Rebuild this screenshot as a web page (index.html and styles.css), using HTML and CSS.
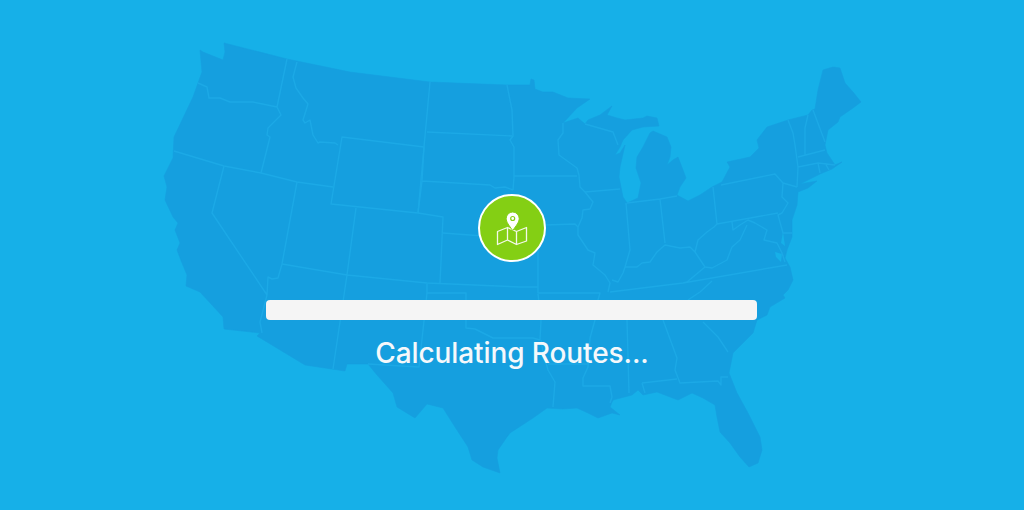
FILE: index.html
```html
<!DOCTYPE html>
<html lang="en">
<head>
<meta charset="utf-8">
<title>Calculating Routes</title>
<link rel="stylesheet" href="styles.css">
</head>
<body>
<main class="screen">
  <svg class="map" viewBox="0 0 1024 510" aria-hidden="true">
    <path class="land" d="M224 43L287 59 350 72 430 82 507 85 530 85 531 79 534 80 535 89 543 92 553 92 568 98 590 99 577 108 563 123 578 118 585 124 588 120 600 115 612 106 607 115 617 118 625 120 643 118 647 116 657 118 659 126 643 127 632 130 623 140 620 147 615 155 620 153 625 145 620 167 619 177 623 197 627 203 638 198 641 183 636 168 637 157 643 147 650 133 653 131 667 137 671 147 670 157 667 165 673 160 678 157 683 170 686 178 680 187 677 195 688 201 700 195 712 187 722 182 730 167 727 162 750 157 759 148 757 140 767 127 788 120 808 115 812 110 815 109 818 90 823 70 833 67 840 68 845 83 853 92 861 102 853 108 840 117 838 122 828 130 825 145 827 153 835 165 842 162 832 169 820 174 800 184 817 181 808 188 798 192 797 205 792 220 792 237 787 250 785 258 790 267 793 280 788 290 783 295 785 298 770 307 767 315 757 320 753 333 733 353 729 373 737 393 748 413 760 437 762 450 758 463 749 467 740 457 730 443 720 432 717 417 715 405 703 398 692 393 678 400 657 392 643 395 638 390 632 395 613 400 610 407 620 415 612 413 598 418 588 413 577 408 563 409 547 408 533 418 510 433 507 437 498 450 497 458 500 473 483 467 472 460 468 447 455 427 443 408 427 404 415 418 397 407 393 393 377 375 368 364 347 364 345 371 305 365 257 336 260 333 224 329 223 317 212 305 200 292 186 286 187 275 182 263 177 250 180 243 175 230 178 223 173 217 165 200 167 187 164 176 173 158 174 137 193 97 198 83 202 72 200 50 203 52 223 60 225 52Z"/>
    <path class="bay" d="M778 216L783 232 781 243 785 246 783 232Z"/>
    <path class="bay" d="M775 252L782 254 781 262 776 257Z"/>
    <g class="borders">
      <path d="M287 59L277 107M198 83L207 87 209 98 220 98 230 102 253 102 277 107 281 115 268 128 267 135 270 137 261 173"/>
      <path d="M297 62L293 77 296 88 303 98 308 104 303 120 305 123 310 120 313 135 318 143 320 142 335 143 338 145"/>
      <path d="M174 151L224 166 261 173 297 182 333 187"/>
      <path d="M342 137L424 147 418 213 331 204Z"/>
      <path d="M224 166L212 213 267 295M297 182L282 264 278 278 272 279 268 277 267 295 260 322 262 333"/>
      <path d="M282 264L347 275 427 283 520 287 538 287M356 208L347 275 333 369"/>
      <path d="M418 213L443 217 440 283M443 233L483 236M545 225L575 224 578 227"/>
      <path d="M430 82L424 147 422 181 418 213M427 132L512 136M422 181L490 185 495 188 505 187 513 190"/>
      <path d="M507 85L512 110 513 136 510 140 514 147 514 177 513 190M514 176L577 176"/>
      <path d="M538 250L538 293 600 293 598 300 595 320 590 338 588 367 583 378 583 386 610 386 612 397 610 403"/>
      <path d="M427 284L427 293 466 293 466 328 475 329 493 338 507 338 533 338 540 340 541 320 538 294M541 340L543 352 548 370 555 382 553 407M548 364L588 364"/>
      <path d="M427 293L419 367 368 364"/>
      <path d="M563 123L563 133 558 140 559 155 577 168 579 175 580 187 585 192 593 202 590 209 583 210 582 218 578 227 578 235 588 250 595 253 593 265 605 275 610 283 608 292"/>
      <path d="M585 124L613 132 618 145M585 192L620 189M626 203L630 250 625 267 623 273 618 282 612 280M660 199L665 243M627 203L660 199 677 196"/>
      <path d="M713 187L717 224M625 267L637 267 642 263 650 262 657 252 665 245 680 248 690 247 695 252 705 267 712 268 727 260 732 247 740 240 747 225M695 252L698 240 707 232 714 227 717 224 778 213"/>
      <path d="M721 185L775 174 783 183 782 197 788 203 782 213 778 215 783 233 792 233M783 183L797 187"/>
      <path d="M732 222L733 230 740 225 748 220 755 223 767 230 764 240 777 243 782 253 785 262"/>
      <path d="M788 120L793 133 795 145 798 167 797 187M808 115L805 128 805 155M813 110L825 142M798 157L825 150M798 167L818 163 835 165M818 163L820 173M825 163L829 170"/>
      <path d="M787 265L683 283 610 292M705 267L687 282 683 283M712 281L700 292 688 300"/>
      <path d="M703 322L718 337 728 352M663 320L677 358 675 370 680 383 718 381 721 385 721 377 728 377M627 320L629 393M642 383L677 379M642 383L645 393"/>
    </g>
  </svg>
  <div class="badge">
    <svg class="badge-icon" viewBox="0 0 64 64" aria-hidden="true">
      <path class="fold" d="M17.500 35.500L27.500 31.500 36.500 35.500 46.500 31.500 46.500 45 36.500 48.500 27.500 44 17.500 48.500ZM27.500 31.500V44M36.500 35.500V48.500"/>
      <path class="pin" d="M32.700 34.500C29 29.500 26.200 26 26.200 22.500A6.500 6.500 0 0 1 39.200 22.500C39.200 26 36.400 29.500 32.700 34.500Z"/>
      <circle class="pin-hole" cx="32.700" cy="22.500" r="2"/>
    </svg>
  </div>
  <div class="bar"></div>
  <p class="label">Calculating Routes...</p>
</main>
</body>
</html>
```

FILE: styles.css
```css
html, body {
  margin: 0;
  padding: 0;
}

.screen {
  position: relative;
  width: 1024px;
  height: 510px;
  overflow: hidden;
  background: #16b0e8;
  display: flex;
  flex-direction: column;
  align-items: center;
  padding-top: 194px;
  box-sizing: border-box;
}

.map {
  position: absolute;
  inset: 0;
  width: 1024px;
  height: 510px;
}

.land {
  fill: #159fdf;
  stroke: #159fdf;
  stroke-width: 0.6;
  stroke-linejoin: round;
}

.bay {
  fill: #16b0e8;
}

.borders path {
  fill: none;
  stroke: #1ca9e6;
  stroke-width: 1.4;
  stroke-linejoin: round;
}

.badge {
  position: relative;
  width: 68px;
  height: 68px;
  box-sizing: border-box;
  border: 2px solid #fff;
  border-radius: 50%;
  background: #84cf14;
}

.badge-icon {
  display: block;
  width: 64px;
  height: 64px;
}

.fold {
  fill: none;
  stroke: #f4f8ea;
  stroke-width: 1.3;
  stroke-linejoin: round;
}

.pin {
  fill: #fff;
  stroke: #84cf14;
  stroke-width: 1;
}

.pin-hole {
  fill: #fff;
  stroke: #84cf14;
  stroke-width: 1.2;
}

.bar {
  position: relative;
  width: 491px;
  height: 20px;
  margin: 38px 1px 0 0;
  border-radius: 4px;
  background: #f5f5f5;
}

.label {
  position: relative;
  margin: 15px 0 0;
  color: #f5f8fb;
  font-family: "Inter", "Liberation Sans", sans-serif;
  font-size: 28px;
  font-weight: 500;
  line-height: 36px;
  letter-spacing: -0.1px;
}
```
